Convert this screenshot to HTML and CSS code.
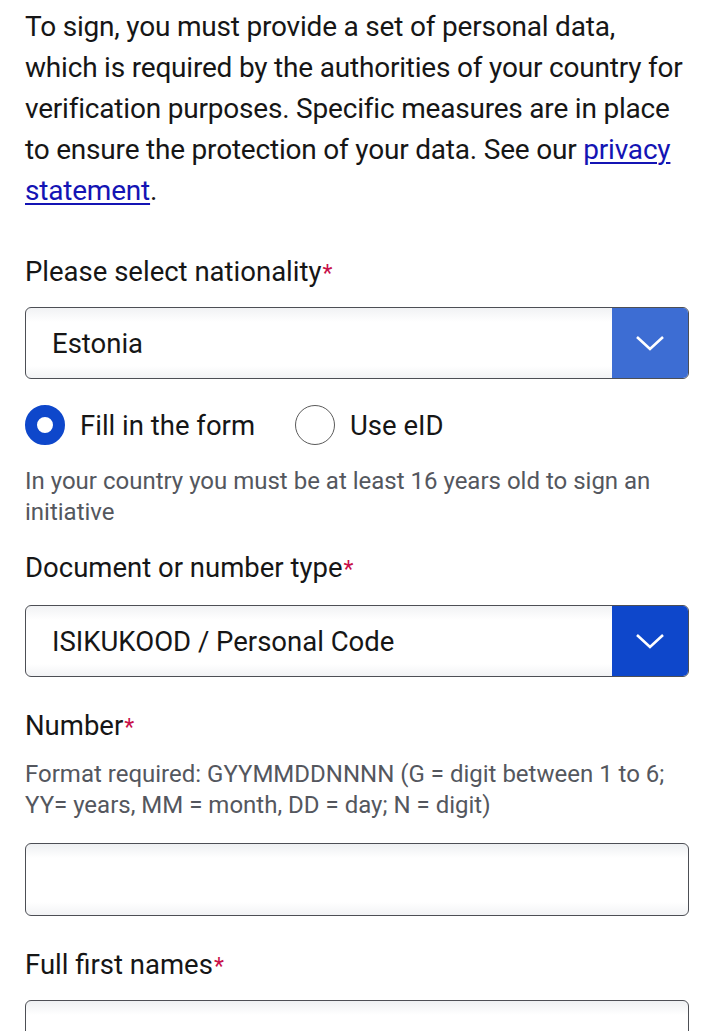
FILE: index.html
```html
<!DOCTYPE html>
<html lang="en">
<head>
<meta charset="utf-8">
<title>Sign</title>
<link rel="stylesheet" href="styles.css">
</head>
<body>
<main class="page">
  <p class="intro">To sign, you must provide a set of personal data, which is required by the authorities of your country for verification purposes. Specific measures are in place to ensure the protection of your data. See our <a href="#" class="link">privacy statement</a>.</p>

  <label class="label label-first">Please select nationality<span class="req">*</span></label>
  <div class="select select-first">
    <span class="select-value">Estonia</span>
    <span class="select-btn select-btn-light">
      <svg width="30" height="18" viewBox="0 0 30 18"><path d="M2 3 L15 15 L28 3" fill="none" stroke="#fff" stroke-width="2.6"/></svg>
    </span>
  </div>

  <div class="radios">
    <span class="radio-item"><span class="radio radio-on"></span><span class="radio-text">Fill in the form</span></span>
    <span class="radio-item"><span class="radio"></span><span class="radio-text">Use eID</span></span>
  </div>

  <p class="hint hint-age">In your country you must be at least 16 years old to sign an initiative</p>

  <label class="label label-doc">Document or number type<span class="req">*</span></label>
  <div class="select">
    <span class="select-value">ISIKUKOOD / Personal Code</span>
    <span class="select-btn">
      <svg width="30" height="18" viewBox="0 0 30 18"><path d="M2 3 L15 15 L28 3" fill="none" stroke="#fff" stroke-width="2.6"/></svg>
    </span>
  </div>

  <label class="label label-num">Number<span class="req">*</span></label>
  <p class="hint hint-format">Format required: GYYMMDDNNNN (G = digit between 1 to 6; YY= years, MM = month, DD = day; N = digit)</p>
  <div class="input"></div>

  <label class="label label-names">Full first names<span class="req">*</span></label>
  <div class="input"></div>
</main>
</body>
</html>
```

FILE: styles.css
```css
html, body {
  margin: 0;
  padding: 0;
  background: #ffffff;
}
body {
  font-family: Roboto, "Liberation Sans", Arial, sans-serif;
  color: #161616;
}
.page {
  padding: 0 28px 0 25px;
  display: flex;
  flex-direction: column;
}
.intro {
  margin: 6px 0 0 0;
  font-size: 28px;
  line-height: 41px;
  letter-spacing: -0.2px;
}
.link {
  color: #1414b4;
  text-decoration: underline;
  text-underline-offset: 3px;
  text-decoration-thickness: 1.5px;
}
.label {
  display: block;
  font-size: 27.5px;
  line-height: 36px;
}
.label-first { margin-top: 43px; }
.label-doc { margin-top: 22px; }
.label-num { margin-top: 31px; }
.label-names { margin-top: 31px; }
.req {
  color: #c8104a;
  font-size: 23px;
  margin-left: 1px;
}
.select {
  margin-top: 17px;
  height: 72px;
  box-sizing: border-box;
  border: 1px solid #4d4f55;
  border-radius: 6px;
  display: flex;
  align-items: stretch;
  overflow: hidden;
  background: linear-gradient(#f1f2f4, #ffffff 14px, #ffffff 58px, #f2f3f5);
}
.select-first {
  margin-top: 15px;
}
.select-value {
  flex: 1;
  display: flex;
  align-items: center;
  padding-left: 26px;
  font-size: 27.5px;
  color: #161616;
}
.select-btn {
  width: 76px;
  background: #0e47cb;
  display: flex;
  align-items: center;
  justify-content: center;
}
.select-btn-light {
  background: #3d6dd3;
}
.radios {
  margin-top: 26px;
  display: flex;
  gap: 40px;
  height: 40px;
  align-items: center;
}
.radio-item {
  display: flex;
  align-items: center;
  gap: 15px;
}
.radio {
  width: 40px;
  height: 40px;
  box-sizing: border-box;
  border-radius: 50%;
  border: 1px solid #5a5a5a;
  background: #fff;
}
.radio-on {
  border: 12px solid #0e47cb;
}
.radio-text {
  font-size: 27.5px;
  color: #161616;
}
.hint {
  margin: 0;
  font-size: 24px;
  line-height: 31px;
  color: #54575e;
}
.hint-age { margin-top: 21px; }
.hint-format { margin-top: 13px; }
.input {
  margin-top: 22px;
  height: 73px;
  box-sizing: border-box;
  border: 1px solid #4d4f55;
  border-radius: 6px;
  background: linear-gradient(#eef0f2, #ffffff 14px, #ffffff 58px, #f2f3f5);
}
.label-names + .input {
  margin-top: 15px;
}
```
